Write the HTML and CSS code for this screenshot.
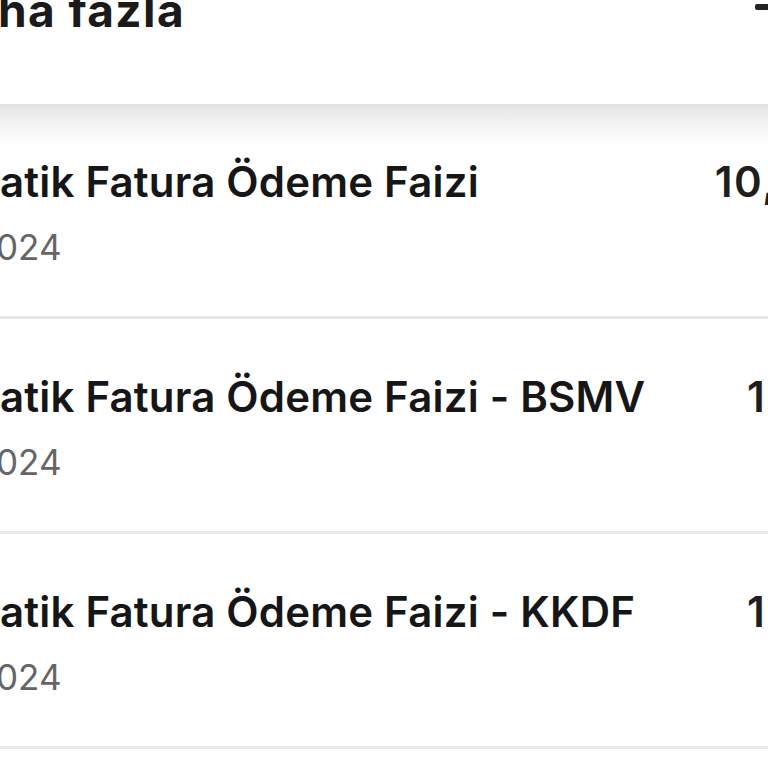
FILE: index.html
```html
<!DOCTYPE html>
<html lang="tr">
<head>
<meta charset="utf-8">
<title>Hesap hareketleri</title>
<link rel="stylesheet" href="styles.css">
</head>
<body>
<div class="page">
  <header class="header">
    <span class="header-title">ha fazla</span>
    <span class="header-icon"></span>
  </header>
  <ul class="list">
    <li class="row">
      <div class="info">
        <div class="title">atik Fatura Ödeme Faizi</div>
        <div class="date">024</div>
      </div>
      <div class="amount">10,45 TL</div>
    </li>
    <li class="row">
      <div class="info">
        <div class="title">atik Fatura Ödeme Faizi - BSMV</div>
        <div class="date">024</div>
      </div>
      <div class="amount">1,57 TL</div>
    </li>
    <li class="row">
      <div class="info">
        <div class="title">atik Fatura Ödeme Faizi - KKDF</div>
        <div class="date">024</div>
      </div>
      <div class="amount">1,57 TL</div>
    </li>
  </ul>
</div>
</body>
</html>
```

FILE: styles.css
```css
html, body {
  margin: 0;
  padding: 0;
  background: #ffffff;
}

body {
  width: 768px;
  height: 768px;
  overflow: hidden;
  font-family: Inter, "Noto Sans", "Liberation Sans", sans-serif;
  color: #1c1c1c;
}

.page {
  width: 901px;
}

.header {
  height: 104px;
  display: flex;
  justify-content: space-between;
  align-items: flex-start;
  width: 768px;
}

.header-title {
  font-size: 46px;
  font-weight: 700;
  line-height: 1;
  letter-spacing: 1.4px;
  margin-top: -13px;
  margin-left: -2px;
  color: #1a1a1a;
}

.header-icon {
  width: 13px;
  height: 6px;
  margin-top: 4px;
  background: #222;
  border-radius: 2px 0 0 2px;
}

.list {
  list-style: none;
  margin: 0;
  padding: 0;
  background: linear-gradient(to bottom, #e1e1e1 0, #ececec 10px, #f5f5f5 24px, #fafafa 34px, #ffffff 44px) no-repeat;
}

.row {
  display: flex;
  justify-content: space-between;
  align-items: flex-start;
  height: 215px;
  padding-top: 53px;
  box-sizing: border-box;
  border-bottom: 3px solid #e8e8e8;
}

.info {
  display: flex;
  flex-direction: column;
  gap: 20px;
}

.title {
  font-size: 42px;
  line-height: 50px;
  font-weight: 600;
  letter-spacing: 0.2px;
  color: #161616;
  white-space: nowrap;
}

.date {
  font-size: 35px;
  line-height: 40px;
  font-weight: 400;
  color: #656565;
  margin-left: -4px;
}

.amount {
  font-size: 42px;
  line-height: 50px;
  font-weight: 600;
  letter-spacing: 1.5px;
  color: #1e1e1e;
  white-space: nowrap;
}
```
